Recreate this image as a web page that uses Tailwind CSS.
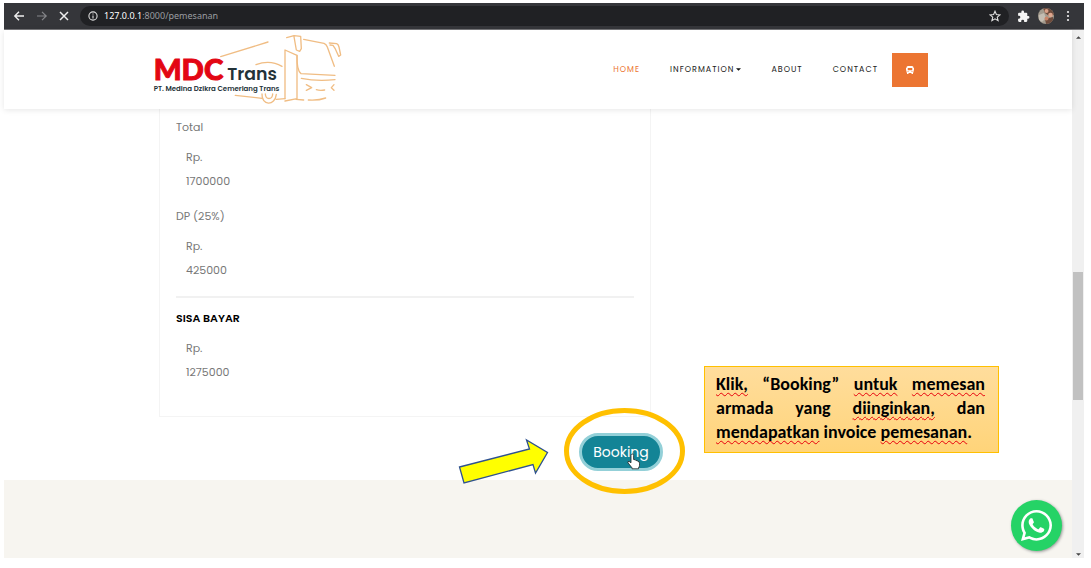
<!DOCTYPE html>
<html lang="id">
<head>
<meta charset="utf-8">
<meta name="viewport" content="width=device-width, initial-scale=1">
<title>MDC Trans - Pemesanan</title>
<script src="https://cdn.jsdelivr.net/npm/@tailwindcss/browser@4"></script>
</head>
<body class="bg-white font-['Poppins',Inter,sans-serif]">
<div class="relative flex h-screen flex-col overflow-hidden pt-[3px] pr-[7px] pb-[10px] pl-1">

  <!-- Browser toolbar -->
  <div class="flex h-[27px] shrink-0 items-center border-b border-[#77777a] bg-[#35363a] text-white">
    <button aria-label="Kembali" class="ml-[7px] grid size-4 place-items-center"><svg class="size-3" viewBox="0 0 12 12" fill="none" stroke="#eee" stroke-width="1.4"><path d="M11 6H2M6 1.8 1.8 6 6 10.2"/></svg></button>
    <button aria-label="Maju" class="ml-[7px] grid size-4 place-items-center"><svg class="size-3" viewBox="0 0 12 12" fill="none" stroke="#85868a" stroke-width="1.2"><path d="M1 6h9M6 1.8 10.2 6 6 10.2"/></svg></button>
    <button aria-label="Berhenti" class="ml-1 grid size-5 place-items-center"><svg class="size-3" viewBox="0 0 12 12" fill="none" stroke="#eee" stroke-width="1.5"><path d="M2 2l8 8M10 2l-8 8"/></svg></button>
    <div class="ml-1.5 flex h-5 flex-1 items-center rounded-full bg-[#202124] pr-2 pl-2">
      <svg class="size-[10px]" viewBox="0 0 10 10" fill="none" stroke="#ddd" stroke-width="1.1"><circle cx="5" cy="5" r="4.1"/><path d="M5 4.4v3M5 2.5v1"/></svg>
      <div class="ml-1.5 flex-1 font-['Noto_Sans',sans-serif] text-[9px] leading-4 text-[#9a9da1]"><span class="text-white">127.0.0.1</span>:8000/pemesanan</div>
      <button aria-label="Tandai"><svg class="size-3" viewBox="0 0 24 24" fill="none" stroke="#e0e0e0" stroke-width="2.2"><path d="m12 2.5 2.8 6.6 7.2.6-5.5 4.7 1.7 7-6.2-3.7-6.2 3.7 1.7-7L2 9.700l7.200-.6z"/></svg></button>
    </div>
    <button aria-label="Ekstensi" class="ml-2"><svg class="size-[13px]" viewBox="0 0 24 24" fill="#f4f4f4"><path d="M20.500 11H19V7a2 2 0 0 0-2-2h-4V3.500a2.500 2.500 0 0 0-5 0V5H4a2 2 0 0 0-2 2v3.800h1.500a2.700 2.700 0 0 1 0 5.400H2V20a2 2 0 0 0 2 2h3.800v-1.500a2.700 2.700 0 0 1 5.400 0V22H17a2 2 0 0 0 2-2v-4h1.500a2.500 2.500 0 0 0 0-5z"/></svg></button>
    <button aria-label="Profil" class="ml-2"><svg class="size-4" viewBox="0 0 16 16"><defs><clipPath id="av"><circle cx="8" cy="8" r="8"/></clipPath></defs><g clip-path="url(#av)"><path fill="#a39b8e" d="M0 0h16v16H0z"/><path fill="#6e4b3c" d="M5 0h11v7l-5 1-4-3zM7 11l8-2v7H8z"/><circle cx="8.500" cy="3" r="2" fill="#d9a188"/><circle cx="12.500" cy="7" r="2.300" fill="#dda58d"/><path fill="#c4bdb2" d="m1 7 5-2 2 5-4 4-3-2z"/><circle cx="8.500" cy="10.500" r="2" fill="#c98468"/></g></svg></button>
    <button aria-label="Menu" class="mr-[10px] ml-2 grid w-3 place-items-center"><svg class="h-3 w-1" viewBox="0 0 4 12" fill="#eee"><circle cx="2" cy="2" r="1.100"/><circle cx="2" cy="6" r="1.100"/><circle cx="2" cy="10" r="1.100"/></svg></button>
  </div>

  <div class="flex min-h-0 flex-1">
    <div class="flex min-w-0 flex-1 flex-col">
      <header class="relative z-10 h-[79px] shrink-0 bg-white shadow-[0_1px_6px_rgba(0,0,0,0.1)]">
        <div class="mx-auto flex h-full max-w-[780px] items-center justify-between">
          <a href="#" aria-label="MDC Trans" class="shrink-0">
            <svg class="h-20 w-[200px]" viewBox="24 3 600 240" fill="none">
              <g stroke="#f0bd84" stroke-width="4" stroke-linecap="round" stroke-linejoin="round">
                <path d="M242 83 384 39"/>
                <path d="M348 107Q390 91 426 112"/>
                <path d="M435 209V63L471 79V209L435 216"/>
                <path d="M471 79Q470 125 483 134L585 139"/>
                <path d="M440 26 462 20 482 22 484 59 479 67 469 63 462 23"/>
                <path d="M491 31 552 43Q559 46 562 54L583 112"/>
                <path d="M568 42 590 44Q595 46 597 54L602 78 596 82 585 58 579 49 570 48"/>
                <path d="M484 148Q530 158 585 152"/>
                <path d="M499 167 515 176 499 184M529 182Q540 186 554 183M582 167 574 176 582 184"/>
                <path d="M468 211 491 213M505 213Q535 215 557 207"/>
                <path d="M286 199 366 208"/>
                <path d="M366 195C364 230 405 232 409 196M376 195C377 213 397 213 398 195"/>
                <path d="M409 211 435 209"/>
              </g>
              <text x="41" y="154" fill="#e30613" stroke="#e30613" stroke-width="3" font-family="Lato, sans-serif" font-weight="900" font-size="88">MDC</text>
              <text x="262" y="154" fill="#233238" font-family="Poppins, Lato, sans-serif" font-weight="600" font-size="52">Trans</text>
              <text x="41" y="187" fill="#233238" font-family="Poppins, Lato, sans-serif" font-weight="600" font-size="21">PT. Medina Dzikra Cemerlang Trans</text>
            </svg>
          </a>
          <nav class="flex items-center text-[8px] tracking-[1px] text-[#222]">
            <a href="#" class="mr-[30px] text-[#ec7532]">HOME</a>
            <a href="#" class="mr-[30px] flex items-center gap-0.5">INFORMATION<svg class="h-[3px] w-[5px]" viewBox="0 0 6 3" fill="#111"><path d="M0 0h6L3 3z"/></svg></a>
            <a href="#" class="mr-[30px]">ABOUT</a>
            <a href="#" class="mr-3.5">CONTACT</a>
            <a href="#" aria-label="Armada" class="grid h-[34px] w-9 place-items-center bg-[#ec7532]">
              <svg class="size-2" viewBox="0 0 16 16" fill="#fff"><path fill-rule="evenodd" d="M4 0h8q3 0 3 3v1h1v5h-1v4h-1v3h-3v-2H5v2H2v-3H1V9H0V4h1V3q0-3 3-3zM3.500 4v4.500h9V4zM3 10.500v1.500h2v-1.500zm8 0v1.500h2v-1.500z"/></svg>
            </a>
          </nav>
        </div>
      </header>

      <main class="shrink-0">
        <div class="mx-auto w-full max-w-[780px] pl-[11px]">
          <section class="h-[308px] max-w-[492px] border border-t-0 border-[#f4f4f4] px-4 pt-1.5 text-[11px] leading-6 text-[#777]">
            <h3>Total</h3>
            <div class="mt-1.5 pl-2.5"><p>Rp.</p><p>1700000</p></div>
            <h3 class="mt-[11px]">DP (25%)</h3>
            <div class="mt-1.5 pl-2.5"><p>Rp.</p><p>425000</p></div>
            <hr class="mt-3.5 mb-2 border-t-2 border-[#f1f1f1]">
            <h3 class="font-semibold text-black">SISA BAYAR</h3>
            <div class="mt-1.5 pl-2.5"><p>Rp.</p><p>1275000</p></div>
          </section>
          <div class="flex max-w-[504px] justify-end pt-4 pb-[9px]">
            <button class="h-[38px] w-[84px] rounded-full border-[3px] border-[#93d0d8] bg-[#138496] text-sm text-white">Booking</button>
          </div>
        </div>
      </main>
      <footer class="flex-1 bg-[#f7f5f0]"></footer>
    </div>

    <!-- Scrollbar -->
    <div class="flex w-3 flex-col items-center bg-[#f0f0f0]">
      <svg class="mt-1.5 h-[3px] w-[5px] shrink-0" viewBox="0 0 6 3" fill="#444"><path d="M0 3h6L3 0z"/></svg>
      <div class="mt-[233px] h-32 w-2.5 bg-[#c1c1c1]"></div>
      <svg class="mt-auto mb-0.5 h-[3px] w-[5px] shrink-0" viewBox="0 0 6 3" fill="#444"><path d="M0 0h6L3 3z"/></svg>
    </div>
  </div>

  <!-- Annotations laid over the page -->
  <svg class="absolute top-[400px] left-[450px] z-20 h-[100px] w-[250px]" viewBox="0 0 250 100" fill="none">
    <path d="M9.500 67 79.500 49 76.500 40 97.500 52.500 85.500 73 83 64.500 14 83z" fill="#ff0" stroke="#2f528f" stroke-width="1.300"/>
    <ellipse cx="174.500" cy="51" rx="58" ry="40.500" stroke="#ffc000" stroke-width="5"/>
    <path transform="translate(-1 -1)" d="M182 56.500q0-1.500 1.300-1.500t1.300 1.500v4q2 0 2.300 1 1.500-.2 2 .8 1.600 0 1.600 2v2q0 1.200-1 2.500v1H183v-1l-4-5q-.5-1.500 1-1.500l2 1.500z" fill="#fff" stroke="#222" stroke-width=".800"/>
  </svg>
  <aside class="absolute top-[366px] left-[704px] z-20 w-[295px] border border-[#ffc000] bg-linear-to-b from-[#ffdd9c] to-[#ffd479] pt-[5px] pr-[13px] pb-2 pl-[11px] font-[Carlito,Lato,sans-serif] text-lg leading-6 font-bold text-black">
    <p class="[text-align-last:justify]"><span class="underline decoration-red-600 decoration-wavy decoration-1 underline-offset-2 [text-decoration-skip-ink:none]">Klik,</span> “Booking” <span class="underline decoration-red-600 decoration-wavy decoration-1 underline-offset-2 [text-decoration-skip-ink:none]">untuk</span> <span class="underline decoration-red-600 decoration-wavy decoration-1 underline-offset-2 [text-decoration-skip-ink:none]">memesan</span></p>
    <p class="[text-align-last:justify]">armada yang <span class="underline decoration-red-600 decoration-wavy decoration-1 underline-offset-2 [text-decoration-skip-ink:none]">diinginkan,</span> dan</p>
    <p class="whitespace-nowrap"><span class="underline decoration-red-600 decoration-wavy decoration-1 underline-offset-2 [text-decoration-skip-ink:none]">mendapatkan</span> invoice <span class="underline decoration-red-600 decoration-wavy decoration-1 underline-offset-2 [text-decoration-skip-ink:none]">pemesanan</span>.</p>
  </aside>
  <a href="#" aria-label="WhatsApp" class="absolute right-[29px] bottom-[17px] z-20 grid size-[51px] place-items-center rounded-full bg-[#25d366] shadow-[1px_1px_3px_#999]">
    <svg class="size-[31px]" viewBox="0 0 448 448" fill="#fff"><path d="M380.900 65.100C339 23.100 283.200 0 223.900 0 101.500 0 1.900 99.600 1.900 222c0 39.100 10.200 77.300 29.600 111L0 448l117.700-30.900c32.400 17.700 68.900 27 106.100 27h.1c122.300 0 224.100-99.600 224.100-222 0-59.300-25.200-115-67.100-157zm-157 341.600c-33.200 0-65.700-8.900-94-25.700l-6.700-4-69.800 18.300L72 327.200l-4.400-7c-18.500-29.400-28.200-63.300-28.200-98.200 0-101.700 82.800-184.500 184.600-184.500 49.300 0 95.600 19.200 130.400 54.100 34.800 34.900 56.200 81.200 56.100 130.500 0 101.800-84.900 184.600-186.600 184.600zm101.200-138.200c-5.500-2.800-32.800-16.200-37.900-18-5.100-1.900-8.800-2.800-12.500 2.800-3.700 5.600-14.300 18-17.600 21.800-3.200 3.700-6.500 4.200-12 1.400-32.600-16.300-54-29.100-75.500-66-5.700-9.800 5.700-9.100 16.300-30.300 1.800-3.700.9-6.900-.5-9.700-1.400-2.800-12.500-30.100-17.100-41.200-4.500-10.800-9.100-9.300-12.500-9.500-3.200-.2-6.900-.2-10.600-.2-3.700 0-9.700 1.400-14.800 6.900-5.100 5.600-19.400 19-19.400 46.300 0 27.300 19.900 53.700 22.600 57.400 2.800 3.700 39.100 59.700 94.800 83.800 35.200 15.200 49 16.500 66.600 13.900 10.700-1.600 32.800-13.400 37.400-26.400 4.600-13 4.600-24.100 3.200-26.400-1.300-2.500-5-3.900-10.500-6.600z"/></svg>
  </a>
</div>
</body>
</html>
